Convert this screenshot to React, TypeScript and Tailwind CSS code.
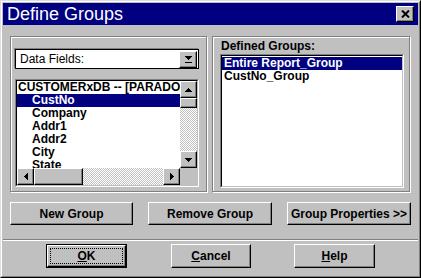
const raised =
  'border border-t-white border-l-white border-r-black border-b-black shadow-[inset_-1px_-1px_0_#808080] bg-[#c0c0c0]';
const checker =
  'bg-[repeating-conic-gradient(#ffffff_0_25%,#c0c0c0_0_50%)] bg-[length:2px_2px]';

const Arrow = ({ dir }: { dir: 'up' | 'down' | 'left' | 'right' }) => {
  const pts = {
    up: '3.5,0 7,4 0,4',
    down: '0,0 7,0 3.5,4',
    left: '4,0 4,7 0,3.5',
    right: '0,0 0,7 4,3.5',
  }[dir];
  const vert = dir === 'up' || dir === 'down';
  return (
    <svg width={vert ? 7 : 4} height={vert ? 4 : 7} shapeRendering="crispEdges">
      <polygon points={pts} fill="black" />
    </svg>
  );
};

const ScrollBtn = ({ dir }: { dir: 'up' | 'down' | 'left' | 'right' }) => (
  <div className={`w-[17px] h-[17px] shrink-0 flex items-center justify-center ${raised}`}>
    <Arrow dir={dir} />
  </div>
);

const Sunken = ({ className, children }: { className: string; children: React.ReactNode }) => (
  <div className={`border border-t-[#808080] border-l-[#808080] border-r-white border-b-white ${className}`}>
    <div className="w-full h-full border border-t-black border-l-black border-r-[#c0c0c0] border-b-[#c0c0c0] bg-white overflow-hidden">
      {children}
    </div>
  </div>
);

const Button = ({ children, className = '' }: { children: React.ReactNode; className?: string }) => (
  <button className={`h-[23px] flex items-center justify-center text-[12px] font-bold text-black ${raised} ${className}`}>
    {children}
  </button>
);

const fields = ['CustNo', 'Company', 'Addr1', 'Addr2', 'City', 'State'];

export default function App() {
  return (
    <div className="w-[421px] h-[278px] bg-[#c0c0c0] font-['Liberation_Sans',Arial,sans-serif] border border-t-[#dfdfdf] border-l-[#dfdfdf] border-r-black border-b-black">
      <div className="h-full flex flex-col border border-t-white border-l-white border-r-[#808080] border-b-[#808080] p-px">
        {/* title bar */}
        <div className="h-[22px] bg-[#000080] flex items-center justify-between pl-[4px] pr-[4px]">
          <span className="text-white text-[18px] leading-none">Define Groups</span>
          <div className={`w-[18px] h-[16px] flex items-center justify-center ${raised}`}>
            <svg width="9" height="8" viewBox="0 0 9 8">
              <path d="M1 0.5 L8 7.5 M8 0.5 L1 7.5" stroke="black" strokeWidth="2" />
            </svg>
          </div>
        </div>

        {/* group boxes */}
        <div className="flex gap-[5px] pl-[7px] mt-[11px]">
          <div className="w-[197px] h-[156px] border border-[#808080] shadow-[inset_1px_1px_0_#fff,1px_1px_0_#fff] pl-[4px] pt-[12px]">
            <div className="w-[184px] h-[20px] border border-black bg-white flex items-center justify-between pl-[4px] pr-px shadow-[-1px_-1px_0_#808080]">
              <span className="text-[12px] text-black">Data Fields:</span>
              <div className={`w-[18px] h-[17px] flex flex-col items-center justify-center gap-[2px] ${raised}`}>
                <Arrow dir="down" />
                <div className="w-[7px] h-px bg-black" />
              </div>
            </div>
            <Sunken className="w-[184px] h-[108px] mt-[10px]">
              <div className="flex flex-col h-full">
                <div className="flex flex-1 min-h-0">
                  <div className="flex-1 overflow-hidden text-[12px] font-bold leading-[13px] text-black whitespace-nowrap">
                    <div className="pl-px">CUSTOMERxDB -- [PARADOX]</div>
                    {fields.map((f, i) => (
                      <div key={f} className={`pl-[15px] ${i === 0 ? 'bg-[#000080] text-white' : ''}`}>
                        {f}
                      </div>
                    ))}
                  </div>
                  <div className="w-[17px] flex flex-col">
                    <ScrollBtn dir="up" />
                    <div className={`h-[10px] ${raised}`} />
                    <div className={`flex-1 ${checker}`} />
                    <ScrollBtn dir="down" />
                  </div>
                </div>
                <div className="flex h-[17px]">
                  <ScrollBtn dir="left" />
                  <div className={`w-[49px] ${raised}`} />
                  <div className={`flex-1 ${checker}`} />
                  <ScrollBtn dir="right" />
                  <div className="w-[17px] bg-[#c0c0c0]" />
                </div>
              </div>
            </Sunken>
          </div>

          <div className="w-[198px] h-[156px] border border-[#808080] shadow-[inset_1px_1px_0_#fff,1px_1px_0_#fff] pl-[7px] pt-[2px]">
            <div className="text-[12px] font-bold text-black leading-[14px] pl-px">Defined Groups:</div>
            <Sunken className="w-[184px] h-[134px] mt-px">
              <div className="text-[12px] font-bold leading-[13px] text-black whitespace-nowrap pt-px">
                <div className="pl-[2px] bg-[#000080] text-white">Entire Report_Group</div>
                <div className="pl-[2px]">CustNo_Group</div>
              </div>
            </Sunken>
          </div>
        </div>

        {/* action buttons */}
        <div className="flex gap-[15px] pl-[7px] mt-[10px]">
          <Button className="w-[123px]">New Group</Button>
          <Button className="w-[124px]">Remove Group</Button>
          <Button className="w-[124px]">Group Properties &gt;&gt;</Button>
        </div>

        <div className="mt-[14px] h-[2px] border-t border-t-[#808080] border-b border-b-white" />

        {/* dialog buttons */}
        <div className="flex pl-[43px] mt-[3px]">
          <div className="w-[81px] h-[24px] border border-black flex">
            <button className={`flex-1 flex items-center justify-center p-[2px] ${raised}`}>
              <span className="w-full h-full border border-dotted border-black flex items-center justify-center text-[12px] font-bold text-black">
                <span className="underline">O</span>K
              </span>
            </button>
          </div>
          <Button className="w-[80px] h-[24px] ml-[44px]">
            <span className="underline">C</span>ancel
          </Button>
          <Button className="w-[81px] h-[24px] ml-[43px]">
            <span className="underline">H</span>elp
          </Button>
        </div>
      </div>
    </div>
  );
}
